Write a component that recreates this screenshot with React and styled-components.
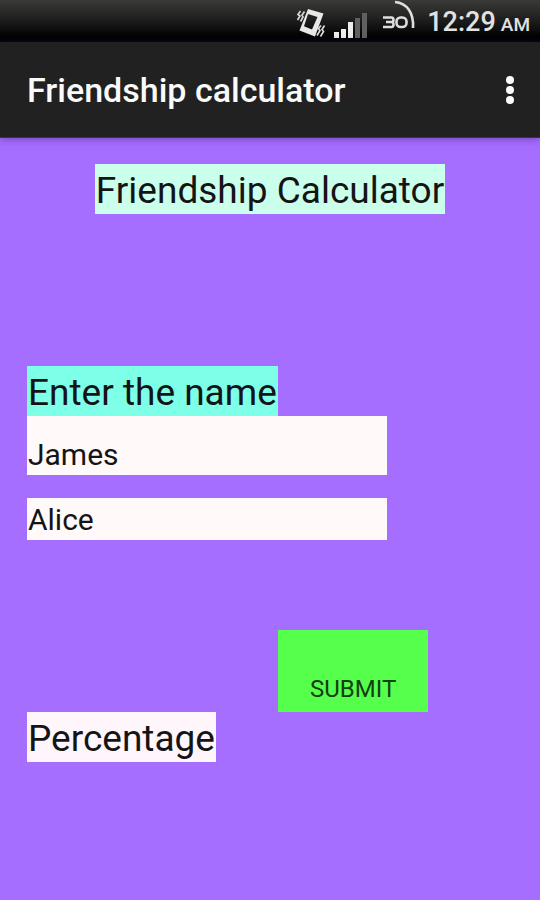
import React, { useState } from 'react';
import styled, { ThemeProvider, createGlobalStyle } from 'styled-components';

const theme = {
  colors: {
    page: '#a66eff',
    bar: '#212121',
    mint: '#caffeb',
    aqua: '#7dffe8',
    snow: '#fff9f9',
    blush: '#fff6fc',
    green: '#55ff4c',
    ink: '#141414',
    white: '#fafafa',
    status: '#e2e2e2',
  },
  fonts: {
    body: 'Roboto, sans-serif',
  },
  gutter: '27px',
};

const GlobalStyle = createGlobalStyle`
  * {
    box-sizing: border-box;
  }

  body {
    background: ${({ theme }) => theme.colors.page};
    color: ${({ theme }) => theme.colors.ink};
    font-family: ${({ theme }) => theme.fonts.body};
    margin: 0;
  }
`;

const Screen = styled.div`
  display: flex;
  flex-direction: column;
  min-height: 100vh;
`;

const StatusBar = styled.div`
  align-items: center;
  background: linear-gradient(#3a3a38, #1c1c1c 50%, #000 90%);
  color: ${({ theme }) => theme.colors.status};
  display: flex;
  gap: 10px;
  height: 42px;
  justify-content: flex-end;
  padding-right: 10px;
`;

const Clock = styled.time`
  font-size: 27px;
  font-weight: 500;
  line-height: 32px;
  padding-top: 4px;
`;

const Meridiem = styled.span`
  font-size: 19px;
  margin-left: 5px;
`;

const AppBar = styled.header`
  align-items: center;
  background: ${({ theme }) => theme.colors.bar};
  border-bottom: 1px solid #3c3348;
  box-shadow: 0 1px 8px rgba(60, 20, 120, 0.5);
  display: flex;
  height: 96px;
  justify-content: space-between;
  padding: 0 16px 0 ${({ theme }) => theme.gutter};
`;

const AppTitle = styled.div`
  color: ${({ theme }) => theme.colors.white};
  font-size: 34px;
  font-weight: 500;
  line-height: 40px;
`;

const MenuButton = styled.button`
  background: none;
  border: 0;
  cursor: pointer;
  display: flex;
  padding: 0;
`;

const Content = styled.form`
  align-items: flex-start;
  display: flex;
  flex: 1;
  flex-direction: column;
  padding: 26px ${({ theme }) => theme.gutter};
`;

const Tag = styled.span`
  background: ${({ theme, $tone }) => theme.colors[$tone]};
  font-size: 37px;
  font-weight: 400;
  line-height: 46px;
  padding: 4px 1px 0;
`;

const Title = styled(Tag)`
  align-self: center;
  margin: 0 0 152px;
`;

const Fields = styled.div`
  align-items: flex-start;
  display: flex;
  flex-direction: column;
  margin-bottom: 90px;
  width: 100%;
`;

const NameInput = styled.input`
  background: ${({ theme }) => theme.colors.snow};
  border: 0;
  border-radius: 0;
  color: inherit;
  font-family: inherit;
  font-size: 30px;
  height: ${({ $tall }) => ($tall ? '59px' : '42px')};
  outline: 0;
  padding: ${({ $tall }) => ($tall ? '17px 1px 0' : '0 1px')};
  width: 74%;

  & + & {
    margin-top: 23px;
  }
`;

const SubmitButton = styled.button`
  background: ${({ theme }) => theme.colors.green};
  border: 0;
  color: #124010;
  cursor: pointer;
  font-family: inherit;
  font-size: 24px;
  line-height: 28px;
  margin-left: calc(50% + 8px);
  padding: 45px 32px 9px;
`;

const VibrateIcon = () => (
  <svg width="30" height="30" viewBox="0 0 30 30" aria-hidden="true">
    <path
      d="M12 1 27.5 5.5 19 28.5 3.5 22.5ZM12 6 8 18.2 16 21.5 21.5 9Z"
      fill="#e8e8e8"
      fillRule="evenodd"
    />
    <g fill="none" stroke="#d8d8d8" strokeWidth="1.7">
      <path d="M4.5 3 2 6.5 4 8 1.5 12M8.5 3.5 6 7 7 9 4.5 13.5" />
      <path d="M25 17.5 22.5 20.5 24 22.5 21 27.5M28.5 17.5 26 21.5 27.5 23.5 24.5 28.5" />
    </g>
  </svg>
);

const SignalIcon = () => (
  <svg width="34" height="26" viewBox="0 0 34 26" aria-hidden="true">
    <path d="M0 20h5v6H0zM7 17h5v9H7zM14 10h5v16h-5z" fill="#ededed" />
    <path d="M21 6h5v20h-5zM28 1h5v25h-5z" fill="#606060" />
  </svg>
);

const BatteryIcon = () => (
  <svg width="34" height="30" viewBox="0 0 34 30" fill="none" stroke="#dedede" aria-hidden="true">
    <path d="M12 2C24 3 31 13 30 28" strokeWidth="2.6" />
    <path
      d="M0 17.5H8.5Q10.5 17.5 10.5 20 10.5 22 8.5 22H3H8.5Q10.5 22 10.5 24.5 10.5 27 8.5 27H0"
      strokeWidth="2.6"
    />
    <rect x="13.5" y="17.5" width="10" height="9.5" rx="4" strokeWidth="2.6" />
  </svg>
);

const StatusIcons = styled.div`
  align-items: flex-end;
  display: flex;
  gap: 8px;
  height: 100%;
  padding-bottom: 4px;

  svg:last-child {
    align-self: flex-start;
    margin-left: 7px;
  }
`;

const OverflowIcon = () => (
  <svg width="28" height="32" viewBox="0 0 28 32" fill="#fafafa" aria-hidden="true">
    <circle cx="14" cy="6" r="4" />
    <circle cx="14" cy="16" r="4" />
    <circle cx="14" cy="26" r="4" />
  </svg>
);

export default function App() {
  const [first, setFirst] = useState('James');
  const [second, setSecond] = useState('Alice');

  return (
    <ThemeProvider theme={theme}>
      <GlobalStyle />
      <Screen>
        <StatusBar>
          <StatusIcons>
            <VibrateIcon />
            <SignalIcon />
            <BatteryIcon />
          </StatusIcons>
          <Clock>
            12:29
            <Meridiem>AM</Meridiem>
          </Clock>
        </StatusBar>
        <AppBar>
          <AppTitle>Friendship calculator</AppTitle>
          <MenuButton type="button" aria-label="More options">
            <OverflowIcon />
          </MenuButton>
        </AppBar>
        <Content onSubmit={(e) => e.preventDefault()}>
          <Title as="h1" $tone="mint">Friendship Calculator</Title>
          <Fields>
            <Tag as="label" htmlFor="first-name" $tone="aqua">Enter the name</Tag>
            <NameInput
              id="first-name"
              $tall
              value={first}
              onChange={(e) => setFirst(e.target.value)}
            />
            <NameInput
              aria-label="Second name"
              value={second}
              onChange={(e) => setSecond(e.target.value)}
            />
          </Fields>
          <SubmitButton type="submit">SUBMIT</SubmitButton>
          <Tag as="output" $tone="blush">Percentage</Tag>
        </Content>
      </Screen>
    </ThemeProvider>
  );
}
